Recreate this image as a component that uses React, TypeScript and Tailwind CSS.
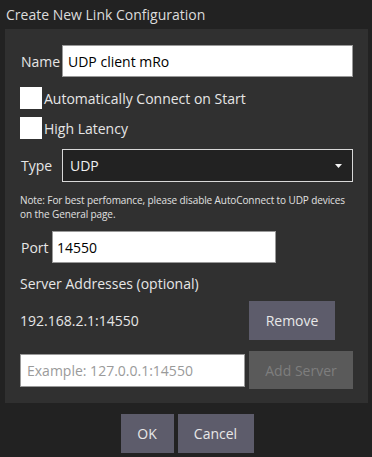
import React from 'react';

const font = { fontFamily: '"Open Sans", "Noto Sans", sans-serif' };

const Checkbox: React.FC<{ label: string; className?: string }> = ({ label, className }) => (
  <div className={`flex items-center h-[22px] ${className ?? ''}`}>
    <div className="w-[22px] h-[22px] bg-white" />
    <span className="ml-[2px] text-[14px] text-[#e6e6e6]">{label}</span>
  </div>
);

export default function App() {
  return (
    <div className="w-[372px] h-[457px] bg-[#222222] flex flex-col overflow-hidden" style={font}>
      {/* Title */}
      <div className="h-[29px] flex items-center pl-[6px] text-[14px] text-[#dcdcdc]">
        Create New Link Configuration
      </div>

      {/* Panel */}
      <div className="ml-[5px] mr-[4px] h-[374px] bg-[#303030] pl-[15px] pr-[15px] pt-[16px] flex flex-col">
        <div className="flex items-center h-[32px]">
          <span className="w-[42px] pl-[1px] text-[14px] text-[#e6e6e6]">Name</span>
          <input
            readOnly
            value="UDP client mRo"
            className="w-[291px] h-[32px] bg-white border border-[#999] px-[5px] text-[14px] text-black outline-none"
          />
        </div>

        <Checkbox label="Automatically Connect on Start" className="mt-[10px]" />
        <Checkbox label="High Latency" className="mt-[8px]" />

        <div className="flex items-center h-[33px] mt-[10px]">
          <span className="w-[42px] pl-[1px] text-[14px] text-[#e6e6e6]">Type</span>
          <div className="w-[291px] h-[33px] bg-[#222222] border border-[#d8d8d8] flex items-center justify-between pl-[7px] pr-[10px]">
            <span className="text-[14px] text-[#f0f0f0]">UDP</span>
            <svg width="7" height="4" viewBox="0 0 7 4">
              <path d="M0 0 L7 0 L3.5 4 Z" fill="#f4f4f4" />
            </svg>
          </div>
        </div>

        <div className="mt-[11px] text-[10px] leading-[14px] text-[#e0e0e0] tracking-[-0.1px]">
          Note: For best perfomance, please disable AutoConnect to UDP devices
          <br />
          on the General page.
        </div>

        <div className="flex items-center h-[32px] mt-[10px]">
          <span className="w-[32px] pl-[1px] text-[14px] text-[#e6e6e6]">Port</span>
          <input
            readOnly
            value="14550"
            className="w-[224px] h-[32px] bg-white border border-[#999] px-[4px] text-[14px] text-black outline-none"
          />
        </div>

        <div className="mt-[10px] h-[20px] flex items-center text-[14px] text-[#e6e6e6]">
          Server Addresses (optional)
        </div>

        <div className="mt-[8px] flex items-center h-[39px]">
          <span className="w-[229px] text-[14px] text-[#e6e6e6]">192.168.2.1:14550</span>
          <button className="w-[86px] h-[39px] bg-[#5d5c6b] text-[14px] text-[#e8e8e8]">Remove</button>
        </div>

        <div className="mt-[11px] flex items-center h-[38px]">
          <input
            readOnly
            placeholder="Example: 127.0.0.1:14550"
            className="w-[225px] h-[33px] bg-white border border-[#999] px-[6px] text-[14px] text-black placeholder:text-[#9a9a9a] outline-none"
          />
          <button className="ml-[4px] w-[104px] h-[38px] bg-[#5a5a5a] text-[14px] text-[#7e7e7e]">Add Server</button>
        </div>
      </div>

      {/* Footer buttons */}
      <div className="mt-[11px] flex justify-center gap-[4px] pl-[2px]">
        <button className="w-[53px] h-[39px] bg-[#5d5c6b] text-[14px] text-[#e8e8e8]">OK</button>
        <button className="w-[76px] h-[39px] bg-[#5d5c6b] text-[14px] text-[#e8e8e8]">Cancel</button>
      </div>
    </div>
  );
}
